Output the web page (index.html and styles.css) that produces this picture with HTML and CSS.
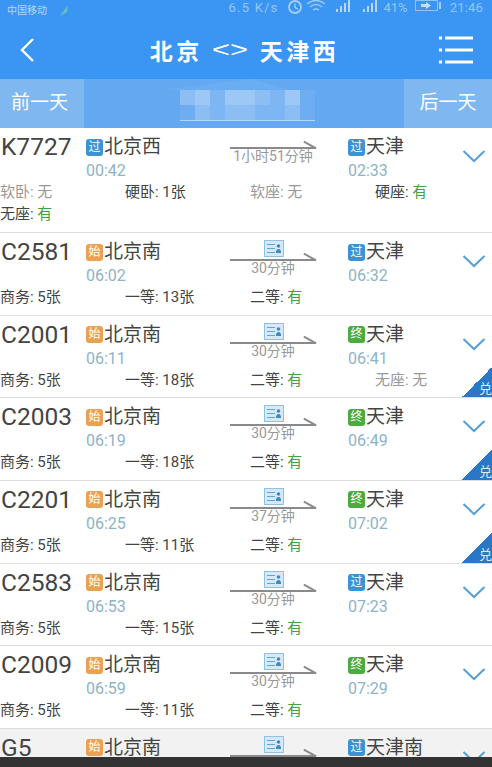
FILE: index.html

```html
<!DOCTYPE html>
<html lang="zh-CN">
<head>
  <meta charset="UTF-8" />
  <meta name="viewport" content="width=device-width, initial-scale=1.0"/>
  <title>北京 &lt;&gt; 天津西</title>
  <link rel="stylesheet" href="styles.css">
</head>
<body>
  <svg class="defs" width="0" height="0">
    <symbol id="chev" viewBox="0 0 24 14"><path d="M1.500 2 L12 12 L22.500 2" fill="none" stroke="#569fd6" stroke-width="2"/></symbol>
    <symbol id="card" viewBox="0 0 20 17">
      <rect x="0.500" y="0.500" width="19" height="16" fill="#d5e9f8" stroke="#8fc1e6"/>
      <path d="M3 4.500 H11 M3 8.500 H11 M3 12.500 H11" stroke="#5fa6d8" stroke-width="1"/>
      <circle cx="14.500" cy="6" r="1.800" fill="#3f88bd"/>
      <path d="M12 13 Q12 9 14.500 9 Q17 9 17 13 Z" fill="#3f88bd"/>
    </symbol>
  </svg>

  <div class="page">
    <div class="status">
      <div class="carrier">中国移动
        <svg class="leaf" width="10" height="12" viewBox="0 0 10 12"><path d="M1 11 L9 0 L8 7 Z" fill="#6dbcc0"/></svg>
      </div>
      <div class="status-right">
        <span class="speed">6.5 K/s</span>
        <svg width="16" height="15" viewBox="0 0 16 15"><circle cx="8" cy="7" r="6" fill="none" stroke="#a4cff8" stroke-width="1.800"/><path d="M8 3.500 V7.500 L11 9" fill="none" stroke="#a4cff8" stroke-width="1.300"/></svg>
        <svg width="20" height="13" viewBox="0 0 20 13"><path d="M1 4 Q10 -3 19 4 M4 7 Q10 2 16 7 M7 10 Q10 8 13 10" fill="none" stroke="#9ccbf7" stroke-width="1.500"/></svg>
        <svg width="24" height="12" viewBox="0 0 24 12"><path d="M7 12 V9 H9 V12 Z M11 12 V6 H13 V12 Z M15 12 V3 H17 V12 Z M19 12 V0 H21 V12 Z" fill="#b5d8fa"/></svg>
        <svg width="24" height="12" viewBox="0 0 24 12"><path d="M7 12 V9 H9 V12 Z M11 12 V6 H13 V12 Z M15 12 V3 H17 V12 Z M19 12 V0 H21 V12 Z" fill="#b5d8fa"/></svg>
        <span>41%</span>
        <svg class="batt" width="26" height="12" viewBox="0 0 26 12"><rect x="0.500" y="0.500" width="22" height="10" fill="none" stroke="#8fc3f6"/><path d="M6 4 H11 V2 L16 5.500 L11 9 V7 H6 Z" fill="#c4e0fb"/><rect x="24" y="2" width="2" height="7" fill="#a4cff8"/></svg>
        <span class="clock">21:46</span>
      </div>
    </div>

    <div class="header">
      <svg class="back" width="16" height="26" viewBox="0 0 16 26"><path d="M14 2 L3 13 L14 24" fill="none" stroke="#fff" stroke-width="2.400"/></svg>
      <div class="title">北京<span class="arrows">&lt;&gt;</span>天津西</div>
      <svg class="menu" width="36" height="28" viewBox="0 0 36 28"><path d="M7 2 H35 M7 14 H35 M7 26 H35" stroke="#fff" stroke-width="3"/><path d="M1 2 H4 M1 14 H4 M1 26 H4" stroke="#fff" stroke-width="3"/></svg>
    </div>

    <div class="datebar">
      <div class="day-btn">前一天</div>
      <div class="date-mid">
        <div class="mosaic">
          <i class="m1"></i><i class="m3"></i><i class="m2"></i><i class="m3"></i><i class="m3"></i><i class="m1"></i><i class="m2"></i><i class="m3"></i><i class="m4"></i>
          <i class="m4"></i><i class="m1"></i><i class="m2"></i><i class="m1"></i><i class="m1"></i><i class="m2"></i><i class="m2"></i><i class="m1"></i><i class="m4"></i>
        </div>
      </div>
      <div class="day-btn">后一天</div>
    </div>

    <div class="list">
      <div class="train tall">
        <div class="top">
          <div class="no">K7727</div>
          <div class="stn"><div class="name"><span class="tag guo">过</span>北京西</div><div class="time">00:42</div></div>
          <div class="dur nocard"><div class="line"></div><div class="len">1小时51分钟</div></div>
          <div class="stn"><div class="name"><span class="tag guo">过</span>天津</div><div class="time">02:33</div></div>
          <svg class="chev"><use href="#chev"/></svg>
        </div>
        <div class="seats">
          <span class="off">软卧: 无</span><span>硬卧: 1张</span><span class="off">软座: 无</span><span>硬座: <b>有</b></span>
          <span>无座: <b>有</b></span>
        </div>
      </div>

      <div class="train">
        <div class="top">
          <div class="no">C2581</div>
          <div class="stn"><div class="name"><span class="tag shi">始</span>北京南</div><div class="time">06:02</div></div>
          <div class="dur"><svg class="card"><use href="#card"/></svg><div class="line"></div><div class="len">30分钟</div></div>
          <div class="stn"><div class="name"><span class="tag guo">过</span>天津</div><div class="time">06:32</div></div>
          <svg class="chev"><use href="#chev"/></svg>
        </div>
        <div class="seats"><span>商务: 5张</span><span>一等: 13张</span><span>二等: <b>有</b></span></div>
      </div>

      <div class="train">
        <div class="top">
          <div class="no">C2001</div>
          <div class="stn"><div class="name"><span class="tag shi">始</span>北京南</div><div class="time">06:11</div></div>
          <div class="dur"><svg class="card"><use href="#card"/></svg><div class="line"></div><div class="len">30分钟</div></div>
          <div class="stn"><div class="name"><span class="tag zhong">终</span>天津</div><div class="time">06:41</div></div>
          <svg class="chev"><use href="#chev"/></svg>
        </div>
        <div class="seats"><span>商务: 5张</span><span>一等: 18张</span><span>二等: <b>有</b></span><span class="off">无座: 无</span></div>
        <div class="dui"><span>兑</span></div>
      </div>

      <div class="train">
        <div class="top">
          <div class="no">C2003</div>
          <div class="stn"><div class="name"><span class="tag shi">始</span>北京南</div><div class="time">06:19</div></div>
          <div class="dur"><svg class="card"><use href="#card"/></svg><div class="line"></div><div class="len">30分钟</div></div>
          <div class="stn"><div class="name"><span class="tag zhong">终</span>天津</div><div class="time">06:49</div></div>
          <svg class="chev"><use href="#chev"/></svg>
        </div>
        <div class="seats"><span>商务: 5张</span><span>一等: 18张</span><span>二等: <b>有</b></span></div>
        <div class="dui"><span>兑</span></div>
      </div>

      <div class="train">
        <div class="top">
          <div class="no">C2201</div>
          <div class="stn"><div class="name"><span class="tag shi">始</span>北京南</div><div class="time">06:25</div></div>
          <div class="dur"><svg class="card"><use href="#card"/></svg><div class="line"></div><div class="len">37分钟</div></div>
          <div class="stn"><div class="name"><span class="tag zhong">终</span>天津</div><div class="time">07:02</div></div>
          <svg class="chev"><use href="#chev"/></svg>
        </div>
        <div class="seats"><span>商务: 5张</span><span>一等: 11张</span><span>二等: <b>有</b></span></div>
        <div class="dui"><span>兑</span></div>
      </div>

      <div class="train">
        <div class="top">
          <div class="no">C2583</div>
          <div class="stn"><div class="name"><span class="tag shi">始</span>北京南</div><div class="time">06:53</div></div>
          <div class="dur"><svg class="card"><use href="#card"/></svg><div class="line"></div><div class="len">30分钟</div></div>
          <div class="stn"><div class="name"><span class="tag guo">过</span>天津</div><div class="time">07:23</div></div>
          <svg class="chev"><use href="#chev"/></svg>
        </div>
        <div class="seats"><span>商务: 5张</span><span>一等: 15张</span><span>二等: <b>有</b></span></div>
      </div>

      <div class="train">
        <div class="top">
          <div class="no">C2009</div>
          <div class="stn"><div class="name"><span class="tag shi">始</span>北京南</div><div class="time">06:59</div></div>
          <div class="dur"><svg class="card"><use href="#card"/></svg><div class="line"></div><div class="len">30分钟</div></div>
          <div class="stn"><div class="name"><span class="tag zhong">终</span>天津</div><div class="time">07:29</div></div>
          <svg class="chev"><use href="#chev"/></svg>
        </div>
        <div class="seats"><span>商务: 5张</span><span>一等: 11张</span><span>二等: <b>有</b></span></div>
      </div>

      <div class="train grey">
        <div class="top">
          <div class="no">G5</div>
          <div class="stn"><div class="name"><span class="tag shi">始</span>北京南</div></div>
          <div class="dur"><svg class="card"><use href="#card"/></svg><div class="line"></div></div>
          <div class="stn"><div class="name"><span class="tag guo">过</span>天津南</div></div>
          <svg class="chev"><use href="#chev"/></svg>
        </div>
      </div>
    </div>

    <div class="darkbar"></div>
  </div>
</body>
</html>
```

FILE: styles.css

```css
body {
  margin: 0;
  font-family: Roboto, "Noto Sans CJK SC", sans-serif;
  background: #fff;
}

.defs {
  position: absolute;
}

.page {
  position: relative;
  width: 492px;
  height: 767px;
  overflow: hidden;
}

/* status bar + header */
.status {
  height: 21px;
  background: #3a96f2;
  display: flex;
  justify-content: space-between;
  align-items: flex-start;
}

.carrier {
  display: flex;
  align-items: center;
  gap: 12px;
  padding: 5px 0 0 7px;
  font-size: 10px;
  line-height: 12px;
  color: #b4d8f8;
}

.status-right {
  display: flex;
  align-items: flex-start;
  gap: 3px;
  padding-right: 9px;
  font-size: 13px;
  color: #94c7f7;
}

.speed {
  margin-right: 6px;
  letter-spacing: 1.200px;
}

.batt { margin: 0 6px 0 4px; }

.clock { letter-spacing: 0.200px; }

.header {
  height: 58px;
  background: #3a96f2;
  display: flex;
  align-items: center;
  justify-content: space-between;
  padding: 0 18px 0 19px;
}

.title {
  display: flex;
  align-items: center;
  margin-left: 16px;
  color: #fff;
  font-size: 23px;
  font-weight: bold;
  letter-spacing: 3.500px;
  font-family: "Noto Sans CJK SC", sans-serif;
}

.arrows {
  margin: 0 12px 0 9px;
  font-family: "Liberation Sans", sans-serif;
  font-size: 22px;
  font-weight: normal;
  letter-spacing: 0;
  transform: scaleX(1.4);
  width: 36px;
  text-align: center;
}

.datebar {
  height: 49px;
  background: #62a9f1;
  display: flex;
  justify-content: space-between;
  align-items: stretch;
}

.day-btn {
  width: 84px;
  background: #7fb7f1;
  color: #fff;
  font-size: 19px;
  line-height: 48px;
  text-align: center;
}

.datebar .day-btn:first-child { padding-right: 5px; width: 79px; }
.datebar .day-btn:last-child { width: 88px; }

.date-mid {
  position: relative;
  flex: 1;
  display: flex;
  align-items: flex-start;
  justify-content: flex-start;
  padding: 11px 0 0 96px;
}

/* faint lighter hump over the blurred date */
.date-mid::before {
  content: "";
  position: absolute;
  left: 76px;
  top: 0;
  width: 130px;
  height: 11px;
  background: #69aef3;
  clip-path: polygon(0 100%, 70% 0, 100% 100%);
}

.mosaic {
  position: relative;
  display: grid;
  grid-template-columns: repeat(9, 15px);
  grid-template-rows: repeat(2, 15px);
  border-bottom: 1px solid #b5d6f6;
}

.mosaic i.m1 { background: #8cbef4; }
.mosaic i.m2 { background: #7eb6f3; }
.mosaic i.m3 { background: #9dc8f5; }
.mosaic i.m4 { background: #6eadf2; }

/* trains */
.train {
  position: relative;
  height: 81.670px;
  border-bottom: 1px solid #ddd;
  overflow: hidden;
}

.train.tall { height: 104px; }
.train.grey { background: #f2f2f2; border-bottom: none; }

.top {
  display: grid;
  grid-template-columns: 86px 144px 118px 114px 24px;
  height: 48px;
  padding-top: 5px;
  color: #444;
}

.no {
  font-size: 24.500px;
  line-height: 28px;
  padding-left: 1px;
  color: #444;
}

.name {
  display: flex;
  align-items: center;
  font-size: 19px;
  line-height: 26px;
  height: 28px;
  color: #444;
}

.tag {
  width: 17px;
  height: 17px;
  margin-right: 1px;
  border-radius: 3px;
  color: #fff;
  font-size: 12px;
  line-height: 17px;
  text-align: center;
}

.tag.guo { background: #3a93d3; }
.tag.shi { background: #eba152; }
.tag.zhong { background: #4bab3e; }

.time {
  font-size: 16px;
  line-height: 20px;
  color: #8db3c7;
}

.dur {
  width: 86px;
  color: #999;
  text-align: center;
}

.card {
  display: block;
  width: 20px;
  height: 17px;
  margin: 2px auto 0 34px;
}

.line {
  position: relative;
  height: 2px;
  margin-top: 2px;
  background: #8a8a8a;
}

.line::after {
  content: "";
  position: absolute;
  right: -1px;
  top: -3px;
  width: 14px;
  height: 2px;
  background: #8a8a8a;
  transform: rotate(28deg);
}

.nocard .line { margin-top: 14px; }

.len {
  font-size: 14px;
  line-height: 16px;
  margin-top: -1px;
}

.chev {
  width: 24px;
  height: 14px;
  margin-top: 16px;
}

.seats {
  display: grid;
  grid-template-columns: repeat(4, 125px);
  font-size: 15px;
  line-height: 22px;
  color: #444;
}

.seats .off { color: #999; }
.seats b { font-weight: normal; color: #43a047; }

.dui {
  position: absolute;
  right: 0;
  bottom: 0;
  width: 30px;
  height: 30px;
  background: linear-gradient(135deg, transparent 50%, #2a78c5 50%);
}

.dui span {
  position: absolute;
  right: 0;
  bottom: 1px;
  font-size: 13px;
  line-height: 14px;
  color: #dcecf9;
}

.darkbar {
  position: absolute;
  left: 0;
  right: 0;
  bottom: 0;
  height: 10px;
  background: #333;
}
```
